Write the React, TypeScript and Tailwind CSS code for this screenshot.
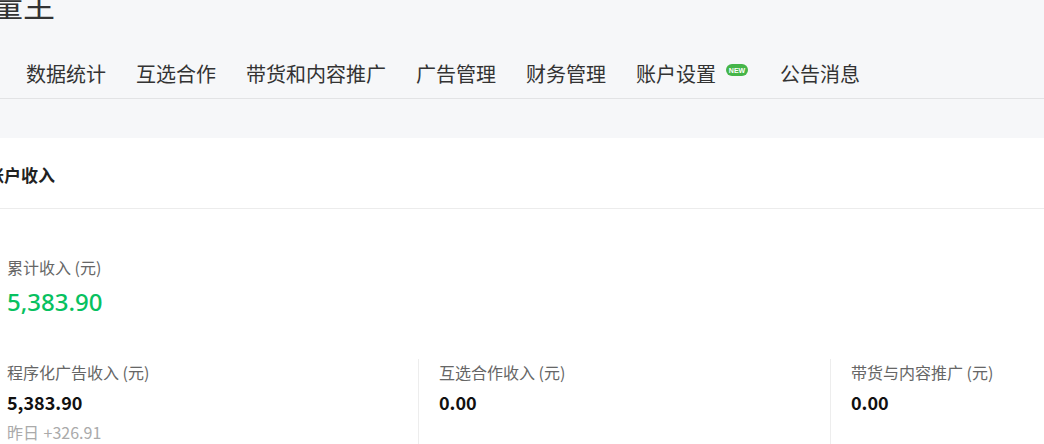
const navItems = ["数据统计", "互选合作", "带货和内容推广", "广告管理", "财务管理", "账户设置", "公告消息"];

const cjk = { fontFamily: '"Noto Sans CJK SC", "Noto Sans", sans-serif' };

type Stat = { label: string; value: string; extra?: string };

const stats: Stat[] = [
  { label: "程序化广告收入 (元)", value: "5,383.90", extra: "+326.91" },
  { label: "互选合作收入 (元)", value: "0.00" },
  { label: "带货与内容推广 (元)", value: "0.00" },
];

function StatCell({ stat, first, width }: { stat: Stat; first?: boolean; width: string }) {
  return (
    <div className={`${width} shrink-0 ${first ? "" : "border-l border-[#ededed] pl-[20px]"} pt-[3px] pb-[10px]`}>
      <div className="text-[16px] leading-[20px] text-[#666]">{stat.label}</div>
      <div className="mt-[7px] text-[18px] leading-[26px] font-semibold text-[#111]">{stat.value}</div>
      {stat.extra && (
        <div className="mt-[7px] text-[16px] leading-[20px] text-[#aaa]">
          昨日 <span className="ml-[1px]">{stat.extra}</span>
        </div>
      )}
      {!stat.extra && <div className="h-[27px]" />}
    </div>
  );
}

export default function App() {
  return (
    <div className="w-[1044px] h-[444px] overflow-hidden bg-white" style={cjk}>
      <header className="bg-[#f6f7f9]">
        <div className="border-b border-[#e2e3e5]">
          <div className="-mt-[13px] -ml-[41px] text-[32px] leading-[32px] text-[#333] whitespace-nowrap">流量主</div>
          <nav className="mt-[41px] mb-[10px] flex h-[28px] items-center gap-[30px] pl-[26px] text-[20px] leading-[28px] text-[#333]">
            {navItems.map((item) =>
              item === "账户设置" ? (
                <div key={item} className="flex items-center gap-[10px]">
                  <span>{item}</span>
                  <span className="mb-[8px] mr-[2px] flex h-[12px] w-[22px] items-center justify-center rounded-full bg-[#45b549] text-[7px] font-bold leading-none text-white" style={{ fontFamily: '"Liberation Sans", sans-serif' }}>
                    NEW
                  </span>
                </div>
              ) : (
                <span key={item}>{item}</span>
              )
            )}
          </nav>
        </div>
        <div className="h-[39px]" />
      </header>

      <section className="bg-white">
        <div className="flex h-[71px] items-center border-b border-[#ececec] pl-[7px] pt-[3px]">
          <h2 className="-ml-[20px] text-[17px] font-bold text-[#222]">账户收入</h2>
        </div>
        <div className="pl-[7px] pt-[48px]">
          <div className="text-[16px] leading-[20px] text-[#666]">累计收入 (元)</div>
          <div className="mt-[9px] text-[24px] leading-[32px] font-medium text-[#07c160]" style={{ fontFamily: '"Noto Sans", sans-serif' }}>
            5,383.90
          </div>
          <div className="mt-[41px] flex">
            <StatCell stat={stats[0]} first width="w-[411px]" />
            <StatCell stat={stats[1]} width="w-[412px]" />
            <StatCell stat={stats[2]} width="w-[300px]" />
          </div>
        </div>
      </section>
    </div>
  );
}
